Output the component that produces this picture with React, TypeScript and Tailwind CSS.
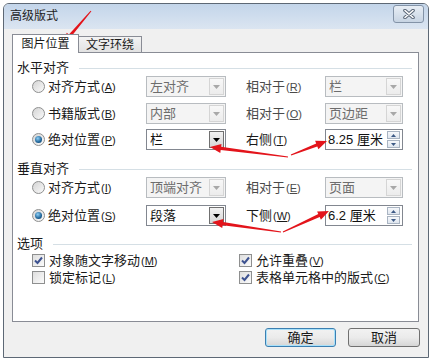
import React from 'react';

type Pt = [number, number];

// red annotation arrows drawn over the screenshot (tail -> tip)
const arrows: [Pt, Pt][] = [
  [[91, 11], [63, 44]],
  [[288, 157], [210, 147]],
  [[291, 155], [327, 141]],
  [[281, 232], [212, 222]],
  [[283, 232], [329, 211]],
];

function arrowPoints(t: Pt, h: Pt) {
  const dx = h[0] - t[0];
  const dy = h[1] - t[1];
  const len = Math.hypot(dx, dy);
  const ux = dx / len;
  const uy = dy / len;
  const nx = -uy;
  const ny = ux;
  const L = 11;
  const bx = h[0] - ux * L;
  const by = h[1] - uy * L;
  const p = (x: number, y: number) => `${x.toFixed(1)},${y.toFixed(1)}`;
  return [
    p(t[0] + nx * 0.5, t[1] + ny * 0.5),
    p(bx + nx * 1.6, by + ny * 1.6),
    p(bx + nx * 4.5, by + ny * 4.5),
    p(h[0], h[1]),
    p(bx - nx * 4.5, by - ny * 4.5),
    p(bx - nx * 1.6, by - ny * 1.6),
    p(t[0] - nx * 0.5, t[1] - ny * 0.5),
  ].join(' ');
}

const Mn: React.FC<{ k: string }> = ({ k }) => (
  <span className="text-[11px] ml-[1px]">
    (<span className="underline">{k}</span>)
  </span>
);

const Radio: React.FC<{ checked?: boolean }> = ({ checked }) => (
  <span className="w-[13px] h-[13px] rounded-full border border-[#8e8f8f] bg-gradient-to-br from-[#d4d4d4] to-[#fafafa] flex items-center justify-center shrink-0">
    {checked && (
      <span className="w-[7px] h-[7px] rounded-full bg-[radial-gradient(circle_at_40%_35%,#8fd0f7,#1f6498_60%,#0d3a60)]" />
    )}
  </span>
);

const Check: React.FC<{ checked?: boolean }> = ({ checked }) => (
  <span className="w-[13px] h-[13px] border border-[#8e8f8f] bg-gradient-to-br from-[#dedede] to-[#fbfbfb] flex items-center justify-center shrink-0">
    {checked && (
      <svg width="9" height="9" viewBox="0 0 9 9">
        <path d="M1 4.5 L3.5 7 L8 1.5" fill="none" stroke="#3d5290" strokeWidth="2" />
      </svg>
    )}
  </span>
);

const Arrow: React.FC<{ color: string }> = ({ color }) => (
  <svg width="7" height="4" viewBox="0 0 7 4">
    <path d="M0 0 H7 L3.5 4 Z" fill={color} />
  </svg>
);

const Combo: React.FC<{ text: string; w: string; enabled?: boolean }> = ({ text, w, enabled }) => (
  <div
    className={`${w} h-[21px] border flex items-center shrink-0 ${
      enabled ? 'bg-white border-[#828790] text-[#111]' : 'bg-[#f4f4f4] border-[#b8bcc0] text-[#6d6d6d]'
    }`}
  >
    <span className="flex-1 pl-[3px]">{text}</span>
    <span
      className={`w-[15px] h-[17px] mr-[1px] border flex items-center justify-center ${
        enabled
          ? 'border-[#707070] bg-gradient-to-b from-[#f2f2f2] to-[#d6d6d6]'
          : 'border-[#d5d5d5] bg-gradient-to-b from-[#f8f8f8] to-[#ececec]'
      }`}
    >
      <Arrow color={enabled ? '#000' : '#a8a8a8'} />
    </span>
  </div>
);

const Spin: React.FC<{ text: string }> = ({ text }) => (
  <div className="w-[78px] h-[21px] border border-[#828790] bg-white flex items-center shrink-0">
    <span className="flex-1 pl-[2px] text-[#111]">{text}</span>
    <span className="w-[13px] h-[17px] mr-[2px] flex flex-col gap-[1px]">
      <span className="flex-1 border border-[#a9b4c2] bg-gradient-to-b from-[#f6f8fb] to-[#dfe6ef] flex items-center justify-center">
        <svg width="5" height="3" viewBox="0 0 5 3">
          <path d="M0 3 H5 L2.5 0 Z" fill="#3d5a86" />
        </svg>
      </span>
      <span className="flex-1 border border-[#a9b4c2] bg-gradient-to-b from-[#f6f8fb] to-[#dfe6ef] flex items-center justify-center">
        <svg width="5" height="3" viewBox="0 0 5 3">
          <path d="M0 0 H5 L2.5 3 Z" fill="#3d5a86" />
        </svg>
      </span>
    </span>
  </div>
);

const Header: React.FC<{ text: string }> = ({ text }) => (
  <div className="flex items-center h-[16px] pl-[4px] pr-[6px]">
    <span>{text}</span>
    <span className="flex-1 h-px bg-[#d5dfe5] ml-[10px]" />
  </div>
);

const PosRow: React.FC<{
  checked?: boolean;
  label: string;
  k: string;
  combo: React.ReactNode;
  label2: string;
  k2: string;
  right: React.ReactNode;
  dim2?: boolean;
}> = ({ checked, label, k, combo, label2, k2, right, dim2 }) => (
  <div className="flex items-center h-[21px] pl-[19px]">
    <Radio checked={checked} />
    <div className="ml-[3px] w-[98px] shrink-0">
      {label}
      <Mn k={k} />
    </div>
    {combo}
    <div className={`ml-[20px] w-[79px] shrink-0 ${dim2 ? 'text-[#4a4a4a]' : ''}`}>
      {label2}
      <Mn k={k2} />
    </div>
    {right}
  </div>
);

export default function App() {
  return (
    <div className="relative w-[432px] h-[362px] bg-white overflow-hidden font-['Liberation_Sans','Noto_Sans_CJK_SC',sans-serif] text-[13px] leading-[16px] text-[#1a1a1a]">
      <div className="ml-[3px] mt-[3px] w-[426px] h-[355px] border border-[#5d6875] rounded-t-[6px] bg-[#f0f0f0] flex flex-col overflow-hidden">
        {/* title bar */}
        <div className="h-[25px] shrink-0 flex items-start justify-between pl-[6px] pr-[4px] bg-gradient-to-b from-[#c3d5ea] to-[#dbe5f1]">
          <span className="mt-[5px] text-[12px] leading-[14px] text-[#222]">高级版式</span>
          <span className="mt-[1px] w-[31px] h-[18px] rounded-[3px] border border-[#8393a7] bg-gradient-to-b from-[#e8eef5] to-[#c7d4e3] flex items-center justify-center">
            <svg width="12" height="10" viewBox="0 0 12 10">
              <path d="M2 1.5 L10 8.5 M10 1.5 L2 8.5" stroke="#5a6778" strokeWidth="3.6" strokeLinecap="round" />
              <path d="M2 1.5 L10 8.5 M10 1.5 L2 8.5" stroke="#fff" strokeWidth="1.6" strokeLinecap="round" />
            </svg>
          </span>
        </div>

        {/* body */}
        <div className="flex-1 flex flex-col pl-[8px] pr-[9px]">
          <div className="mt-[5px] h-[18px] flex items-end text-[12px] leading-[14px]">
            <div className="relative z-10 -mb-px w-[67px] h-[19px] bg-white border border-b-0 border-[#898c95] flex items-center justify-center">
              图片位置
            </div>
            <div className="w-[63px] h-[16px] border border-l-0 border-b-0 border-[#898c95] bg-gradient-to-b from-[#f3f3f3] to-[#e2e2e2] flex items-center justify-center">
              文字环绕
            </div>
          </div>

          <div className="h-[270px] bg-white border border-[#898c95] flex flex-col">
            <div className="h-[7px]" />
            <Header text="水平对齐" />
            <PosRow
              label="对齐方式"
              k="A"
              combo={<Combo text="左对齐" w="w-[80px]" />}
              label2="相对于"
              k2="R"
              dim2
              right={<Combo text="栏" w="w-[78px]" />}
            />
            <div className="h-[6px]" />
            <PosRow
              label="书籍版式"
              k="B"
              combo={<Combo text="内部" w="w-[80px]" />}
              label2="相对于"
              k2="O"
              dim2
              right={<Combo text="页边距" w="w-[78px]" />}
            />
            <div className="h-[5px]" />
            <PosRow
              checked
              label="绝对位置"
              k="P"
              combo={<Combo text="栏" w="w-[80px]" enabled />}
              label2="右侧"
              k2="T"
              right={<Spin text="8.25 厘米" />}
            />

            <div className="h-[11px]" />
            <Header text="垂直对齐" />
            <PosRow
              label="对齐方式"
              k="I"
              combo={<Combo text="顶端对齐" w="w-[80px]" />}
              label2="相对于"
              k2="E"
              dim2
              right={<Combo text="页面" w="w-[78px]" />}
            />
            <div className="h-[7px]" />
            <PosRow
              checked
              label="绝对位置"
              k="S"
              combo={<Combo text="段落" w="w-[80px]" enabled />}
              label2="下侧"
              k2="W"
              right={<Spin text="6.2 厘米" />}
            />

            <div className="h-[10px]" />
            <Header text="选项" />
            <div className="grid grid-cols-[207px_1fr] pl-[19px]">
              <div className="h-[17px] flex items-center gap-[4px]">
                <Check checked />
                <span>
                  对象随文字移动
                  <Mn k="M" />
                </span>
              </div>
              <div className="h-[17px] flex items-center gap-[4px]">
                <Check checked />
                <span>
                  允许重叠
                  <Mn k="V" />
                </span>
              </div>
              <div className="h-[17px] flex items-center gap-[4px]">
                <Check />
                <span>
                  锁定标记
                  <Mn k="L" />
                </span>
              </div>
              <div className="h-[17px] flex items-center gap-[4px]">
                <Check checked />
                <span>
                  表格单元格中的版式
                  <Mn k="C" />
                </span>
              </div>
            </div>
          </div>

          <div className="mt-[6px] flex justify-end gap-[12px] -mr-px">
            <button className="w-[71px] h-[19px] rounded-[3px] border border-[#3c7fb1] bg-gradient-to-b from-[#f2f2f2] via-[#ebebeb] to-[#d6d6d6] shadow-[inset_0_0_0_1px_#a8e1fb] flex items-center justify-center">
              确定
            </button>
            <button className="w-[72px] h-[19px] rounded-[3px] border border-[#707070] bg-gradient-to-b from-[#f2f2f2] via-[#ebebeb] to-[#d6d6d6] flex items-center justify-center">
              取消
            </button>
          </div>
        </div>
      </div>

      <svg className="absolute inset-0 pointer-events-none" width="432" height="362" viewBox="0 0 432 362">
        {arrows.map(([t, h], i) => (
          <polygon key={i} points={arrowPoints(t, h)} fill="#e3141b" />
        ))}
      </svg>
    </div>
  );
}
